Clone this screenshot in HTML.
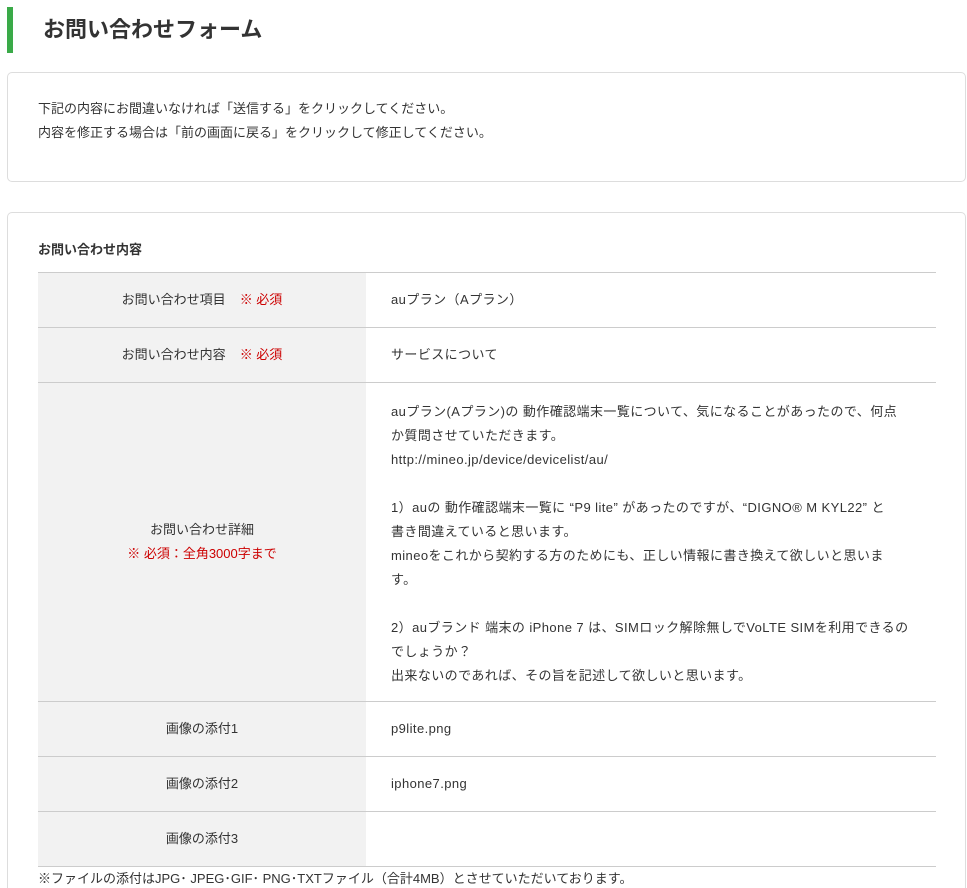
<!DOCTYPE html>
<html><head><meta charset="utf-8"><style>
html,body{margin:0;overflow:hidden}
body{background:#fff;font-family:"Liberation Sans","Noto Sans CJK JP",sans-serif;color:#333;font-size:13px;width:967px;height:888px;position:relative}
.bar{position:absolute;left:7px;top:7px;width:6px;height:46px;background:#3aaa48}
h1{position:absolute;left:43px;top:14px;margin:0;font-size:22px;line-height:32px;font-weight:bold;color:#333}
.box{position:absolute;left:7px;right:1px;border:1px solid #ddd;border-radius:5px;box-sizing:border-box}
.b1{top:72px;height:110px}
.b1 p{position:absolute;left:30px;top:24px;margin:0;line-height:24px}
.b2{top:212px;height:676px;border-bottom:none;border-radius:5px 5px 0 0}
h2{position:absolute;left:30px;top:27px;margin:0;font-size:13px;font-weight:bold;line-height:20px}
table{position:absolute;left:30px;top:59px;width:898px;border-collapse:collapse}
td{border-top:1px solid #ccc;border-bottom:1px solid #ccc;line-height:24px;padding:0}
td.l{width:328px;background:#f2f2f2;text-align:center}
td.v{padding:0 10px 0 25px;letter-spacing:0.42px;white-space:nowrap}
tr{height:55px}
.r{color:#c00;margin-left:14px}
.note{position:absolute;left:30px;top:654px;line-height:24px}
</style></head><body>
<div class="bar"></div>
<h1>お問い合わせフォーム</h1>
<div class="box b1"><p>下記の内容にお間違いなければ「送信する」をクリックしてください。<br>内容を修正する場合は「前の画面に戻る」をクリックして修正してください。</p></div>
<div class="box b2">
<h2>お問い合わせ内容</h2>
<table>
<tr><td class="l">お問い合わせ項目<span class="r">※ 必須</span></td><td class="v">auプラン（Aプラン）</td></tr>
<tr><td class="l">お問い合わせ内容<span class="r">※ 必須</span></td><td class="v">サービスについて</td></tr>
<tr style="height:319px"><td class="l">お問い合わせ詳細<br><span style="color:#c00">※ 必須：全角3000字まで</span></td><td class="v" style="vertical-align:top;padding-top:17px;padding-bottom:13px">auプラン(Aプラン)の 動作確認端末一覧について、気になることがあったので、何点<br>か質問させていただきます。<br>http://mineo.jp/device/devicelist/au/<br><br>1）auの 動作確認端末一覧に “P9 lite” があったのですが、“DIGNO® M KYL22” と<br>書き間違えていると思います。<br>mineoをこれから契約する方のためにも、正しい情報に書き換えて欲しいと思いま<br>す。<br><br>2）auブランド 端末の iPhone 7 は、SIMロック解除無しでVoLTE SIMを利用できるの<br>でしょうか？<br>出来ないのであれば、その旨を記述して欲しいと思います。</td></tr>
<tr><td class="l">画像の添付1</td><td class="v">p9lite.png</td></tr>
<tr><td class="l">画像の添付2</td><td class="v">iphone7.png</td></tr>
<tr><td class="l">画像の添付3</td><td class="v"></td></tr>
</table>
<div class="note">※ファイルの添付はJPG･ JPEG･GIF･ PNG･TXTファイル（合計4MB）とさせていただいております。</div>
</div>
</body></html>
